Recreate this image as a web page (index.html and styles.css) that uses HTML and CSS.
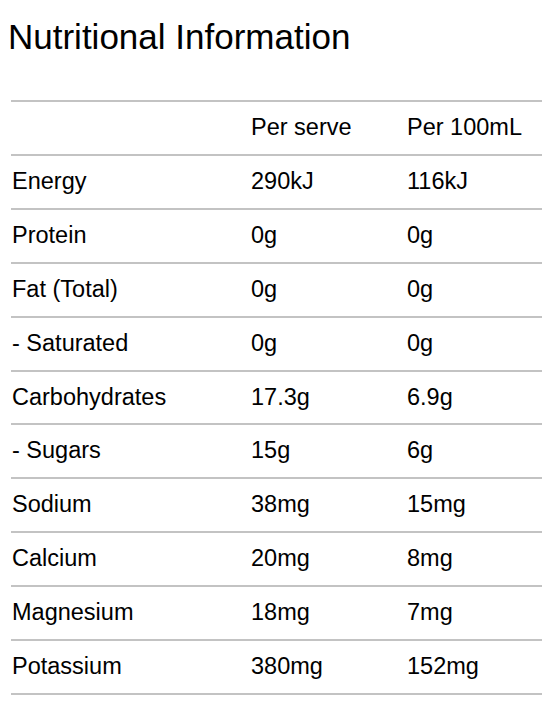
FILE: index.html
```html
<!DOCTYPE html>
<html lang="en">
<head>
<meta charset="utf-8">
<title>Nutritional Information</title>
<link rel="stylesheet" href="styles.css">
</head>
<body>
<main class="page">
  <h1 class="title">Nutritional Information</h1>
  <table class="nutrition">
    <colgroup>
      <col class="col-name">
      <col class="col-serve">
      <col class="col-100">
    </colgroup>
    <thead>
      <tr><th></th><th>Per serve</th><th>Per 100mL</th></tr>
    </thead>
    <tbody>
      <tr><td>Energy</td><td>290kJ</td><td>116kJ</td></tr>
      <tr><td>Protein</td><td>0g</td><td>0g</td></tr>
      <tr><td>Fat (Total)</td><td>0g</td><td>0g</td></tr>
      <tr><td>- Saturated</td><td>0g</td><td>0g</td></tr>
      <tr><td>Carbohydrates</td><td>17.3g</td><td>6.9g</td></tr>
      <tr><td>- Sugars</td><td>15g</td><td>6g</td></tr>
      <tr><td>Sodium</td><td>38mg</td><td>15mg</td></tr>
      <tr><td>Calcium</td><td>20mg</td><td>8mg</td></tr>
      <tr><td>Magnesium</td><td>18mg</td><td>7mg</td></tr>
      <tr><td>Potassium</td><td>380mg</td><td>152mg</td></tr>
    </tbody>
  </table>
</main>
</body>
</html>
```
FILE: styles.css
```css
html, body {
  margin: 0;
  padding: 0;
  background: #ffffff;
}

body {
  font-family: "Liberation Sans", Arial, sans-serif;
  color: #000000;
}

.page {
  padding: 0;
}

.title {
  margin: 17px 0 0 8px;
  font-size: 35px;
  font-weight: normal;
  line-height: 39px;
}

.nutrition {
  margin: 44px 0 0 11px;
  width: 531px;
  border-collapse: collapse;
  border-top: 2px solid #c3c3c3;
  font-size: 23.5px;
}

.col-name { width: 239px; }
.col-serve { width: 156px; }
.col-100 { width: 136px; }

.nutrition th,
.nutrition td {
  text-align: left;
  font-weight: normal;
  padding: 12px 0 12px 1px;
  line-height: 27.9px;
  border-bottom: 2px solid #c3c3c3;
  white-space: nowrap;
}
```
